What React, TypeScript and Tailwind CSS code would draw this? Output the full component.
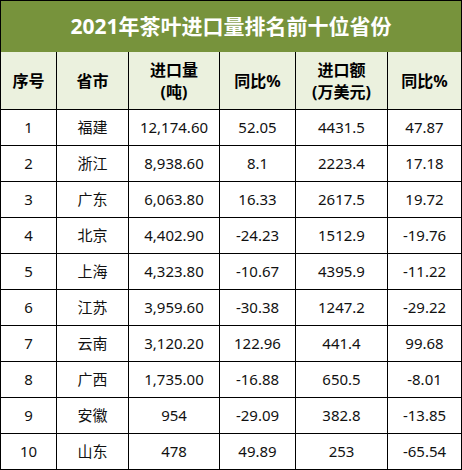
const rows = [
  ["1", "福建", "12,174.60", "52.05", "4431.5", "47.87"],
  ["2", "浙江", "8,938.60", "8.1", "2223.4", "17.18"],
  ["3", "广东", "6,063.80", "16.33", "2617.5", "19.72"],
  ["4", "北京", "4,402.90", "-24.23", "1512.9", "-19.76"],
  ["5", "上海", "4,323.80", "-10.67", "4395.9", "-11.22"],
  ["6", "江苏", "3,959.60", "-30.38", "1247.2", "-29.22"],
  ["7", "云南", "3,120.20", "122.96", "441.4", "99.68"],
  ["8", "广西", "1,735.00", "-16.88", "650.5", "-8.01"],
  ["9", "安徽", "954", "-29.09", "382.8", "-13.85"],
  ["10", "山东", "478", "49.89", "253", "-65.54"],
];

const headers: [string, string?][] = [
  ["序号"],
  ["省市"],
  ["进口量", "(吨)"],
  ["同比%"],
  ["进口额", "(万美元)"],
  ["同比%"],
];

export default function App() {
  return (
    <div
      className="w-[462px] h-[470px] border border-black bg-white text-black"
      style={{ fontFamily: '"Noto Sans", "Noto Sans CJK SC", sans-serif' }}
    >
      {/* Title */}
      <div className="h-[51px] bg-[#77933c] flex items-center justify-center text-white font-bold text-[21px]">
        2021年茶叶进口量排名前十位省份
      </div>

      {/* Table */}
      <div className="grid grid-cols-[56px_72px_91px_76px_92px_73px]">
        {headers.map((h, i) => (
          <div
            key={i}
            className={`h-[58px] bg-[#ebf1de] border-b border-black flex flex-col items-center justify-center font-bold text-[16px] leading-[22px] ${
              i < 5 ? "border-r" : ""
            }`}
          >
            <span>{h[0]}</span>
            {h[1] && <span>{h[1]}</span>}
          </div>
        ))}
        {rows.map((r, ri) =>
          r.map((c, ci) => (
            <div
              key={ri + "-" + ci}
              className={`flex items-center justify-center text-[15px] text-[#111] border-black ${
                ri < 9 ? "h-[36px] border-b" : "h-[35px]"
              } ${ci < 5 ? "border-r" : ""}`}
            >
              {c}
            </div>
          ))
        )}
      </div>
    </div>
  );
}
